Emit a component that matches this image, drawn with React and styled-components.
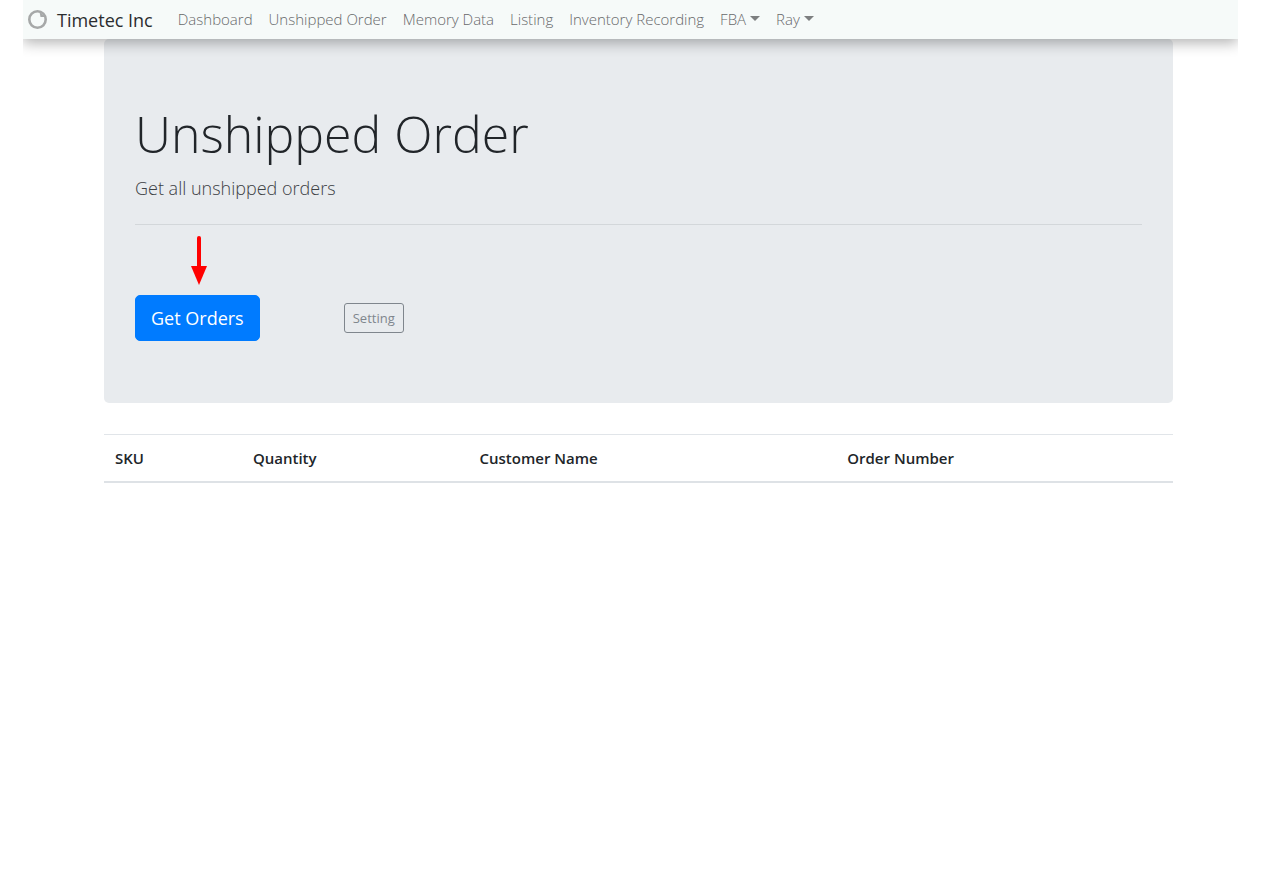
import React from "react";
import styled, { createGlobalStyle } from "styled-components";

const GlobalStyle = createGlobalStyle`
  *, *::before, *::after { box-sizing: border-box; }
  body {
    margin: 0;
    background: #fff;
    color: #212529;
    font-family: "Segoe UI", "Open Sans", "Noto Sans", sans-serif;
    font-size: 15px;
    line-height: 23px;
  }
`;

const Page = styled.div`
  padding: 0 23px;
`;

const Navbar = styled.nav`
  position: relative;
  display: flex;
  align-items: center;
  height: 39px;
  padding: 0 4px;
  background: #f6faf9;
  box-shadow: 0 4px 14px 0 rgba(0, 0, 0, 0.3);
  clip-path: inset(0 0 -24px 0);
`;

const Brand = styled.a`
  display: flex;
  align-items: center;
  gap: 9px;
  margin-right: 25px;
  color: #2b2d2f;
  font-size: 18px;
  line-height: 24px;
  text-decoration: none;
`;

const NavList = styled.ul`
  display: flex;
  gap: 16px;
  margin: 0;
  padding: 0;
  list-style: none;
`;

const NavLink = styled.a`
  display: flex;
  align-items: center;
  gap: 4px;
  color: #68696b;
  font-weight: 300;
  text-decoration: none;
  white-space: nowrap;
`;

const Caret = styled.span`
  margin-bottom: 2px;
  border-top: 5px solid #7d7f80;
  border-left: 5px solid transparent;
  border-right: 5px solid transparent;
`;

const Content = styled.main`
  padding: 0 65px 0 81px;
`;

const Jumbotron = styled.section`
  padding: 62px 31px;
  border-radius: 5px;
  background: #e8ebee;
`;

const Title = styled.h1`
  margin: 0 0 7px;
  font-size: 50px;
  font-weight: 300;
  line-height: 66px;
`;

const Lead = styled.p`
  margin: 0;
  color: #3c4044;
  font-size: 18px;
  font-weight: 300;
  line-height: 28px;
`;

const Divider = styled.hr`
  height: 1px;
  margin: 22px 0 11px;
  border: 0;
  background: #d3d7da;
`;

const ArrowRow = styled.div`
  display: flex;
  height: 59px;
  padding-left: 56px;
`;

const Actions = styled.div`
  display: flex;
  align-items: center;
  gap: 84px;
`;

const Button = styled.button`
  height: 46px;
  padding: 0 15px;
  border: 1px solid #007bff;
  border-radius: 5px;
  background: #007bff;
  color: #fff;
  font-family: inherit;
  font-size: 18px;
  line-height: 28px;
`;

const OutlineButton = styled(Button)`
  height: 30px;
  padding: 0 8px;
  border-color: #7f868d;
  border-radius: 3px;
  background: transparent;
  color: #7f868d;
  font-size: 13px;
  line-height: 20px;
`;

const Table = styled.table`
  width: 100%;
  margin-top: 31px;
  border-collapse: collapse;
  table-layout: fixed;
`;

const HeadCell = styled.th`
  width: ${(p) => p.$width};
  padding: 12px 11px 11px;
  border-top: 1px solid #e1e5e9;
  border-bottom: 2px solid #dee2e6;
  font-size: 15px;
  font-weight: 600;
  text-align: left;
`;

const links = [
  { label: "Dashboard" },
  { label: "Unshipped Order" },
  { label: "Memory Data" },
  { label: "Listing" },
  { label: "Inventory Recording" },
  { label: "FBA", menu: true },
  { label: "Ray", menu: true },
];

const columns = [
  { label: "SKU", width: "12.9%" },
  { label: "Quantity", width: "21.2%" },
  { label: "Customer Name", width: "34.4%" },
  { label: "Order Number", width: "31.5%" },
];

const Logo = () => (
  <svg width="21" height="21" viewBox="0 0 21 21" aria-hidden="true">
    <circle cx="10.5" cy="10.5" r="8.2" fill="none" stroke="#a6a8a8" strokeWidth="2.6" />
    <path d="M12.5 3 L18.5 8 L13.5 8 Z" fill="#a6a8a8" />
  </svg>
);

const Arrow = () => (
  <svg width="16" height="49" viewBox="0 0 16 49" aria-hidden="true">
    <path d="M8 2 V32" stroke="#f00" strokeWidth="4" strokeLinecap="round" />
    <path d="M0 30 H16 L8 49 Z" fill="#f00" />
  </svg>
);

export default function App() {
  return (
    <>
      <GlobalStyle />
      <Page>
        <Navbar>
          <Brand href="#">
            <Logo />
            Timetec Inc
          </Brand>
          <NavList>
            {links.map(({ label, menu }) => (
              <li key={label}>
                <NavLink href="#">
                  {label}
                  {menu && <Caret />}
                </NavLink>
              </li>
            ))}
          </NavList>
        </Navbar>
        <Content>
          <Jumbotron>
            <Title>Unshipped Order</Title>
            <Lead>Get all unshipped orders</Lead>
            <Divider />
            <ArrowRow>
              <Arrow />
            </ArrowRow>
            <Actions>
              <Button type="button">Get Orders</Button>
              <OutlineButton type="button">Setting</OutlineButton>
            </Actions>
          </Jumbotron>
          <Table>
            <thead>
              <tr>
                {columns.map(({ label, width }) => (
                  <HeadCell key={label} scope="col" $width={width}>
                    {label}
                  </HeadCell>
                ))}
              </tr>
            </thead>
          </Table>
        </Content>
      </Page>
    </>
  );
}
